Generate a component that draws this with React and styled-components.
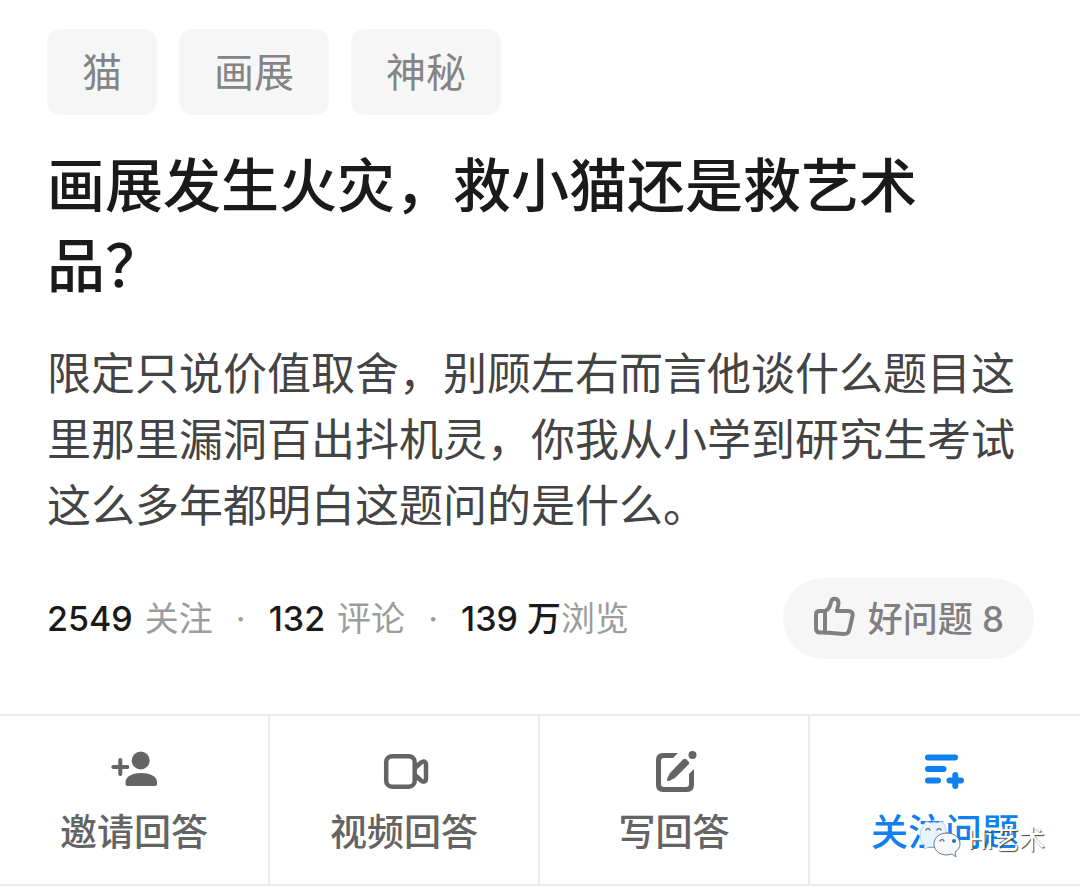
import React from "react";
import styled, { createGlobalStyle } from "styled-components";

const Global = createGlobalStyle`
  * { box-sizing: border-box; }
  body {
    margin: 0;
    background: #fff;
    color: #1a1a1a;
    font-family: Inter, "Noto Sans CJK SC", sans-serif;
  }
  button { font: inherit; color: inherit; border: 0; cursor: pointer; }
`;

const Content = styled.main`
  padding: 29px 46px 55px 47px;
`;

const Tags = styled.nav`
  display: flex;
  gap: 22px;
`;

const Tag = styled.a`
  padding: 2px 35px 0;
  border-radius: 14px;
  background: #f6f6f6;
  color: #848484;
  font-size: 40px;
  line-height: 84px;
  text-decoration: none;
`;

const Title = styled.h1`
  margin: 27px 0 0;
  padding-right: 12px;
  font-family: "Noto Sans CJK SC", sans-serif;
  font-size: 58px;
  line-height: 80px;
  font-weight: 500;
`;

const Detail = styled.p`
  margin: 36px 0 0;
  color: #444;
  font-family: "Noto Sans CJK SC", sans-serif;
  font-size: 44px;
  line-height: 66px;
`;

const Meta = styled.div`
  display: flex;
  align-items: center;
  justify-content: space-between;
  margin-top: 42px;
`;

const Stats = styled.div`
  display: flex;
  font-size: 34px;
  line-height: 48px;
  color: #9c9c9c;
`;

const Stat = styled.span`
  display: flex;
  gap: ${(p) => (p.$tight ? 0 : 12)}px;
`;

const Separator = styled.span`
  width: 56px;
  text-align: center;
`;

const Count = styled.strong`
  color: #1a1a1a;
  font-weight: 500;
`;

const GoodButton = styled.button`
  display: flex;
  align-items: center;
  gap: 13px;
  height: 81px;
  padding: 0 30px 4px;
  border-radius: 41px;
  background: #f6f6f6;
  color: #808080;
  font-size: 35px;
  font-weight: 500;
`;

const Actions = styled.div`
  display: grid;
  grid-template-columns: repeat(4, 1fr);
  border: solid #ebebeb;
  border-width: 2px 0;
`;

const ActionCell = styled.div`
  position: relative;
  display: grid;
  border-right: 2px solid #ebebeb;
  &:last-child { border-right: 0; }
`;

const Action = styled.button`
  display: flex;
  flex-direction: column;
  align-items: center;
  gap: 13px;
  padding: 31px 0 24px;
  background: none;
  color: ${(p) => (p.$active ? "#0f80ee" : "#646464")};
  font-size: 37px;
  line-height: 54px;
  font-weight: 500;
`;

const Watermark = styled.div`
  position: absolute;
  right: 35px;
  bottom: 24px;
  display: flex;
  align-items: center;
  gap: 6px;
  color: #fff;
  font-size: 26px;
  line-height: 40px;
  text-shadow: 1px 1px 1px #444;
  pointer-events: none;
`;

const ThumbIcon = () => (
  <svg width="42" height="42" viewBox="0 0 42 42" fill="none" stroke="currentColor" strokeWidth="4" strokeLinejoin="round" strokeLinecap="round" aria-hidden="true">
    <path d="M12 15H6.500q-3.500 0-3.500 3.500v14q0 4 4 4h5z" />
    <path d="M12 15c4-1 5-5 6-9 1-5 7.500-4 7.500 1 0 3-1.500 5-1.500 8h11c4 0 5 2 4.500 5l-3 13c-1 4-2 5-6 5L12 36.500" />
  </svg>
);

const InviteIcon = () => (
  <svg width="50" height="46" viewBox="0 0 50 46" fill="currentColor" aria-hidden="true">
    <circle cx="31.700" cy="13.500" r="9" />
    <path d="M16.500 37v-2c0-6 8-9 15.700-9S48 29 48 35v2q0 2-2 2H18.500q-2 0-2-2z" />
    <path d="M11.300 13v14M4.300 20h14" stroke="currentColor" strokeWidth="4" strokeLinecap="round" />
  </svg>
);

const VideoIcon = () => (
  <svg width="50" height="46" viewBox="0 0 50 46" fill="none" stroke="currentColor" strokeWidth="4.500" strokeLinejoin="round" aria-hidden="true">
    <rect x="7.200" y="9.200" width="28.500" height="30.500" rx="6" />
    <path d="M36 21l6-5.500c2.500-2 5-1 5 2v14c0 3-2.500 4-5 2L36 28" />
  </svg>
);

const WriteIcon = () => (
  <svg width="50" height="46" viewBox="0 0 50 46" aria-hidden="true">
    <path d="M29 6l-5 5H15q-3 0-3 3v23q0 3 3 3h22q3 0 3-3V27l5-5v16q0 7-7 7H14q-7 0-7-7V13q0-7 7-7z" fill="currentColor" />
    <path d="M34 12.500q2-1.500 3.500 0l2 2q1.500 1.500 0 3L26 31l-6 3q-2.500 .5-2-2L21 26z" fill="currentColor" />
    <circle cx="43.500" cy="8" r="4" fill="currentColor" />
  </svg>
);

const FollowIcon = () => (
  <svg width="50" height="46" viewBox="0 0 50 46" fill="none" stroke="currentColor" strokeWidth="6" strokeLinecap="round" aria-hidden="true">
    <path d="M8 10.500h27M8 22h15.500M8 33.500h10M29.500 33.500h11.500M35.300 28v11" />
  </svg>
);

const WeChatIcon = () => (
  <svg width="42" height="40" viewBox="0 0 42 40" fill="none" strokeLinecap="round" aria-hidden="true">
    <path d="M5 4q2-4 6-1 4-1 8 0 4-3 6 1 3 5 2 11-1 10-9 12l-8 0-5 2 1-4C-1 21 0 10 5 4z" fill="#e9f3fc" stroke="#b5d3ee" />
    <path d="M7 10q2-3 4 0M18 10q2-3 4 0" stroke="#777" strokeWidth="1.500" />
    <path d="M28 13c-8 0-13 5-13 11s5 11 13 11l5-1 4 3-1-5c3-2 5-4 5-8 0-6-5-11-13-11z" fill="#f5faff" stroke="#777" />
    <path d="M21 21q2-3 4 0" stroke="#777" strokeWidth="1.500" />
    <circle cx="35" cy="21" r="2" fill="#1c6fc0" />
  </svg>
);

const actions = [
  { label: "邀请回答", Icon: InviteIcon },
  { label: "视频回答", Icon: VideoIcon },
  { label: "写回答", Icon: WriteIcon },
  { label: "关注问题", Icon: FollowIcon, active: true },
];

export default function App() {
  return (
    <>
      <Global />
      <Content>
        <Tags>
          {["猫", "画展", "神秘"].map((t) => (
            <Tag href="#" key={t}>{t}</Tag>
          ))}
        </Tags>
        <Title>画展发生火灾，救小猫还是救艺术品？</Title>
        <Detail>
          限定只说价值取舍，别顾左右而言他谈什么题目这里那里漏洞百出抖机灵，你我从小学到研究生考试这么多年都明白这题问的是什么。
        </Detail>
        <Meta>
          <Stats>
            <Stat><Count>2549</Count>关注</Stat>
            <Separator>·</Separator>
            <Stat><Count>132</Count>评论</Stat>
            <Separator>·</Separator>
            <Stat $tight><Count>139 万</Count>浏览</Stat>
          </Stats>
          <GoodButton type="button">
            <ThumbIcon />
            好问题 8
          </GoodButton>
        </Meta>
      </Content>
      <Actions>
        {actions.map(({ label, Icon, active }) => (
          <ActionCell key={label}>
            <Action type="button" $active={active}>
              <Icon />
              {label}
            </Action>
            {active && (
              <Watermark>
                <WeChatIcon />
                Hi艺术
              </Watermark>
            )}
          </ActionCell>
        ))}
      </Actions>
    </>
  );
}
